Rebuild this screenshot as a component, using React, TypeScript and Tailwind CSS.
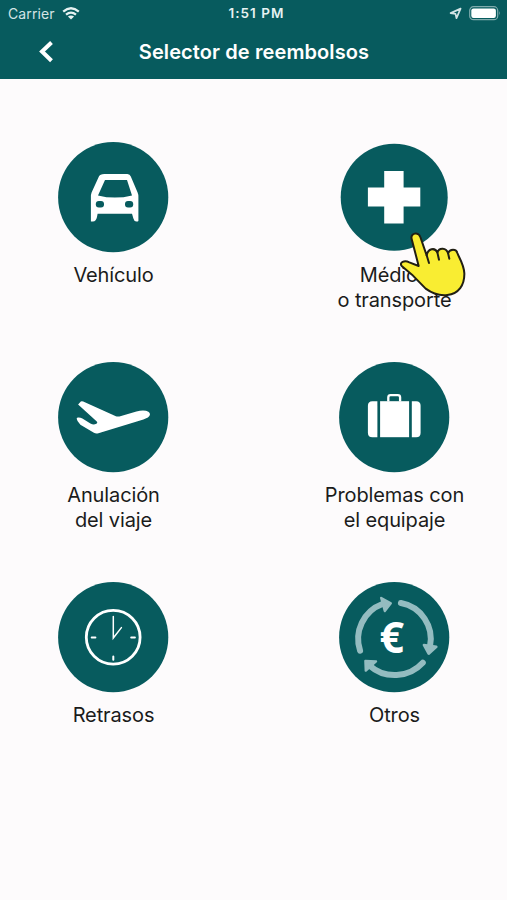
import React from "react";

const CarIcon = () => (
  <g>
    <path
      fill="white"
      fillRule="evenodd"
      d="M46 31.5H69Q71.6 31.5 72.4 34L79.2 50Q80 52 80 54V78.5Q79.5 79.2 78 79.2Q75.6 78.8 75 76L73.6 71.3H39.2L38.6 74.5Q37.8 78.6 34.5 79.2H32.5V54Q32.5 52 33.2 50L40.5 34Q41.4 31.5 46 31.5ZM46.6 37.5L39.6 53Q56.5 57.4 73.6 53L68.6 37.5Z"
    />
    <rect x="37.4" y="58.6" width="8.2" height="6.6" rx="3" fill="#075b5e" />
    <rect x="66.6" y="58.6" width="8.2" height="6.6" rx="3" fill="#075b5e" />
  </g>
);

const CrossIcon = () => (
  <path
    fill="white"
    d="M44.8 28.5H64.2V45.2H80.9V64.2H64.2V81.2H44.8V64.2H28.5V45.2H44.8Z"
  />
);

const PlaneIcon = () => (
  <path
    fill="white"
    d="M19.7 42.2L22.4 39Q23.4 38.6 24.8 39L57.5 53.8Q59 54.5 61 54L78 49Q86 47 90 49.3Q93.4 52 89.5 55L85 57.2L40 70.8Q37.5 71.6 35.5 70.3L22 62.3Q18.5 59 18.2 56.2L19.2 55.2Q21.5 54.8 24 56.2L32 61.2Q34.5 62.4 36.6 61.9L38.4 61.2Q39.4 60.6 38.4 59.2Z"
  />
);

const SuitcaseIcon = () => (
  <g fill="white">
    <path d="M38 38.8V74.8H33Q28.5 74.8 28.5 70.3V43.3Q28.5 38.8 33 38.8Z" />
    <rect x="40.7" y="38.8" width="29" height="36" />
    <path d="M72.4 38.8V74.8H76.8Q81.2 74.8 81.2 70.3V43.3Q81.2 38.8 76.8 38.8Z" />
    <path
      d="M48.9 39V35Q48.9 32.7 51.2 32.7H58.4Q60.7 32.7 60.7 35V39"
      fill="none"
      stroke="white"
      strokeWidth="2.3"
    />
  </g>
);

const ClockIcon = () => (
  <g fill="none" stroke="white" strokeWidth="1.5" strokeLinecap="round">
    <circle cx="54.8" cy="54.8" r="26.9" strokeWidth="2.8" />
    <path d="M54.9 34V55.6L63 45.2" />
    <path d="M33.3 55H37M72.8 55H76.5M54.9 74V77.3" strokeWidth="2" />
  </g>
);

const EuroIcon = () => (
  <g>
    <g fill="none" stroke="#94bcc0" strokeWidth="6" strokeLinecap="round">
      <path d="M20.7 68.3A37.2 37.2 0 0 1 43 21.6" />
      <path d="M61.5 20.6A36.5 36.5 0 0 1 90.6 64" />
      <path d="M83.4 80.3A38 38 0 0 1 30 83" />
    </g>
    <g fill="#94bcc0" stroke="#94bcc0" strokeWidth="2.4" strokeLinejoin="round">
      <path d="M41.8 15.6L51.4 20.8L45.4 28.6Z" />
      <path d="M84.4 62.6L97 64.4L89.3 71.4Z" />
      <path d="M26 78.6L36.6 79L26.4 88.2Z" />
    </g>
    <text
      x="52.4"
      y="70.8"
      textAnchor="middle"
      fill="white"
      className="font-['Open_Sans',sans-serif] text-[43px] font-bold"
    >
      €
    </text>
  </g>
);

const options = [
  { lines: ["Vehículo"], icon: <CarIcon /> },
  { lines: ["Médico", "o transporte"], icon: <CrossIcon />, radius: 53.5 },
  { lines: ["Anulación", "del viaje"], icon: <PlaneIcon /> },
  { lines: ["Problemas con", "el equipaje"], icon: <SuitcaseIcon /> },
  { lines: ["Retrasos"], icon: <ClockIcon /> },
  { lines: ["Otros"], icon: <EuroIcon /> },
];

const StatusBar = () => (
  <div className="grid h-[27px] grid-cols-3 items-center pl-2 pr-[6px] text-[13px] leading-none">
    <div className="flex items-center gap-[7px]">
      <span className="text-[14px] tracking-[0.1px] text-[#d3e4e5]">Carrier</span>
      <svg width="18" height="13" viewBox="0 0 18 13" fill="none" stroke="#e6f2f2" strokeWidth="2.3">
        <path d="M1.2 4.6Q9 -2 16.8 4.6" />
        <path d="M4 7.7Q9 3.6 14 7.7" />
        <path d="M9 12.4L5.9 9.6Q9 7.2 12.1 9.6Z" fill="#e6f2f2" stroke="none" />
      </svg>
    </div>
    <span className="whitespace-nowrap pl-[4px] text-center text-[13.5px] font-semibold tracking-[1px] text-[#e6f2f2]">
      1:51 PM
    </span>
    <div className="flex items-center justify-end gap-[7px]">
      <svg width="13" height="13" viewBox="0 0 13 13" fill="none" stroke="#d3e4e5" strokeWidth="1.7" strokeLinejoin="round">
        <path d="M11.6 1.6L1.6 6.1L6.5 6.9L7.5 11.2Z" />
      </svg>
      <svg width="32" height="15" viewBox="0 0 32 15" fill="none">
        <rect x="0.7" y="0.7" width="28" height="13" rx="3.8" stroke="#7fabad" strokeWidth="1.2" />
        <rect x="2.3" y="2.4" width="24.6" height="9.6" rx="2.2" fill="white" />
        <path d="M30.2 5Q31.8 7.2 30.2 9.4Z" fill="#7fabad" />
      </svg>
    </div>
  </div>
);

const PointerHand = () => (
  <svg
    className="pointer-events-none absolute left-[395px] top-[225px]"
    width="75"
    height="80"
    viewBox="0 0 225 240"
  >
    <path
      d="M50 42C45 24 71 19 76 36L95 91C99 71 119 66 127 82C133 66 154 68 159 84C165 71 184 71 187 84C191 96 207 118 208 145C209 180 191 207 157 210C130 213 111 205 92 191L51 149L20 123C12 112 28 105 43 112L71 123Z"
      fill="#f9ed32"
      stroke="#211f14"
      strokeWidth="6"
      strokeLinejoin="round"
    />
    <path
      d="M95 91L102 114M127 82L132 104M159 84L163 101"
      fill="none"
      stroke="#211f14"
      strokeWidth="6"
      strokeLinecap="round"
    />
  </svg>
);

export default function App() {
  return (
    <div className="relative h-[900px] w-[507px] overflow-hidden bg-[#fdfbfc] font-[Inter,'Liberation_Sans',sans-serif]">
      <header className="h-[79px] bg-[#075b5e] text-white">
        <StatusBar />
        <div className="grid h-[50px] grid-cols-[100px_1fr_100px] items-center">
          <button className="pl-[38px]" aria-label="Atrás">
            <svg width="18" height="24" viewBox="0 0 18 24" fill="none" stroke="white" strokeWidth="4">
              <path d="M13.5 2.5L4 11.5L13.5 20.8" />
            </svg>
          </button>
          <h1 className="whitespace-nowrap pl-px text-center text-[20px] font-semibold tracking-[0.1px]">
            Selector de reembolsos
          </h1>
        </div>
      </header>

      <main className="grid grid-cols-[226px_226px] justify-between pt-[63px]">
        {options.map((option) => (
          <div key={option.lines[0]} className="flex h-[220px] flex-col items-center">
            <svg
              className="shrink-0 overflow-visible"
              width="110"
              height="110"
              viewBox="-0.4 -0.4 110 110"
            >
              <circle cx="54.8" cy="54.8" r={option.radius || 55.1} fill="#075b5e" />
              {option.icon}
            </svg>
            <div className="mt-[11px] whitespace-nowrap pl-px text-center text-[20px] leading-[24.5px] tracking-[-0.12px] text-[#1b1b1b]">
              {option.lines.map((line) => (
                <div key={line}>{line}</div>
              ))}
            </div>
          </div>
        ))}
      </main>

      <PointerHand />
    </div>
  );
}
